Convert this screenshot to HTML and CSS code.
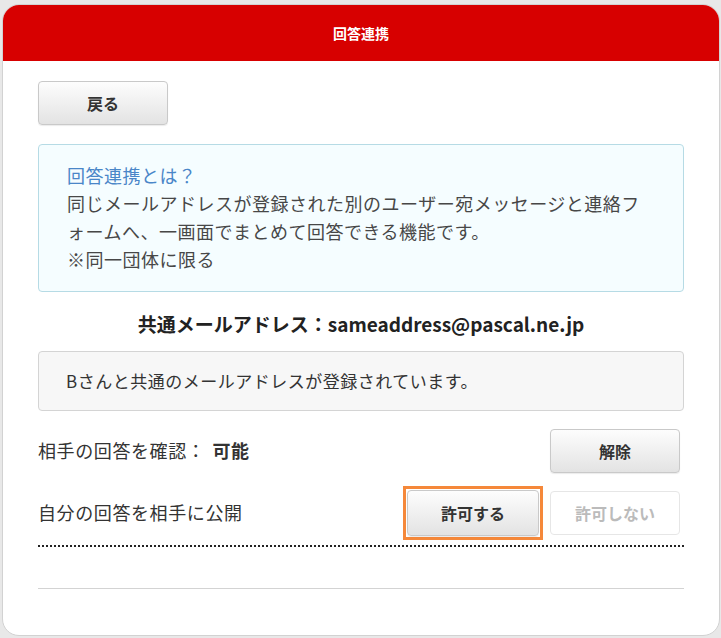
FILE: index.html
```html
<!DOCTYPE html>
<html lang="ja">
<head>
    <meta charset="UTF-8">
    <meta name="viewport" content="width=device-width, initial-scale=1.0">
    <title>回答連携</title>
    <link rel="stylesheet" href="styles.css">
</head>
<body>
    <div class="card">
        <div class="card-header">回答連携</div>
        <div class="card-body">
            <button class="btn btn-back">戻る</button>

            <div class="info-box">
                <div class="info-title">回答連携とは？</div>
                <div>同じメールアドレスが登録された別のユーザー宛メッセージと連絡フォームへ、一画面でまとめて回答できる機能です。</div>
                <div>※同一団体に限る</div>
            </div>

            <div class="shared-address">共通メールアドレス：sameaddress@pascal.ne.jp</div>

            <div class="notice-box">Bさんと共通のメールアドレスが登録されています。</div>

            <div class="setting-row">
                <div class="setting-label">相手の回答を確認：<strong>可能</strong></div>
                <div class="setting-actions">
                    <button class="btn">解除</button>
                </div>
            </div>

            <div class="setting-row setting-row-last">
                <div class="setting-label">自分の回答を相手に公開</div>
                <div class="setting-actions">
                    <span class="focus-ring"><button class="btn">許可する</button></span>
                    <button class="btn" disabled>許可しない</button>
                </div>
            </div>

            <hr class="divider">
        </div>
    </div>
</body>
</html>
```

FILE: styles.css
```css
body {
    margin: 0;
    padding: 4px 1px 1px 2px;
    background: #e8e8e8;
    font-family: "Noto Sans CJK JP", "Noto Sans", sans-serif;
    color: #333;
}
.card {
    background: white;
    border: 1px solid #d2d2d2;
    border-radius: 17px;
    overflow: hidden;
    height: 632px;
    box-sizing: border-box;
}
.card-header {
    background: #d70000;
    color: white;
    font-size: 14px;
    font-weight: bold;
    text-align: center;
    height: 56px;
    line-height: 56px;
}
.card-body {
    padding: 20px 35px 0 35px;
}
.btn {
    width: 130px;
    height: 44px;
    border: 1px solid #c9c9c9;
    border-radius: 4px;
    background: linear-gradient(#fdfdfd, #e3e3e3);
    box-shadow: 0 1px 1px rgba(0,0,0,0.08);
    font-family: inherit;
    font-size: 16px;
    font-weight: bold;
    color: #333;
    padding: 0;
    cursor: pointer;
    display: block;
}
.btn:disabled {
    background: white;
    border-color: #e6e6e6;
    box-shadow: none;
    color: #bbb;
    cursor: default;
}
.focus-ring {
    display: block;
    border: 3px solid #f5883a;
    padding: 1px;
    margin: -5px 0;
}
.focus-ring .btn {
    width: 132px;
    height: 46px;
}
.info-box {
    margin-top: 19px;
    background: #f5fdff;
    border: 1px solid #b6dbe5;
    border-radius: 4px;
    padding: 16px 26px 18px 28px;
    font-size: 18px;
    line-height: 28px;
    letter-spacing: 0.5px;
    color: #474747;
}
.info-title {
    color: #4a86c8;
}
.shared-address {
    margin-top: 18px;
    text-align: center;
    font-size: 19px;
    font-weight: bold;
    line-height: 28px;
    color: #222;
}
.notice-box {
    margin-top: 13px;
    background: #f7f7f7;
    border: 1px solid #d4d4d4;
    border-radius: 4px;
    height: 58px;
    line-height: 58px;
    padding: 0 27px;
    font-size: 17px;
    letter-spacing: 0.5px;
    color: #333;
}
.setting-row {
    display: flex;
    align-items: center;
    justify-content: space-between;
    margin-top: 18px;
}
.setting-row-last {
    margin-top: 18px;
}
.setting-label {
    font-size: 18px;
    letter-spacing: 0.6px;
    color: #333;
    margin-top: -3px;
}
.setting-label strong {
    margin-left: 7px;
}
.setting-actions {
    display: flex;
    align-items: center;
    gap: 7px;
    padding-right: 4px;
}
.divider {
    margin: 10px 0 0 0;
    border: none;
    border-top: 2px dotted #222;
    height: 41px;
    border-bottom: 1px solid #d3d3d3;
}
```
